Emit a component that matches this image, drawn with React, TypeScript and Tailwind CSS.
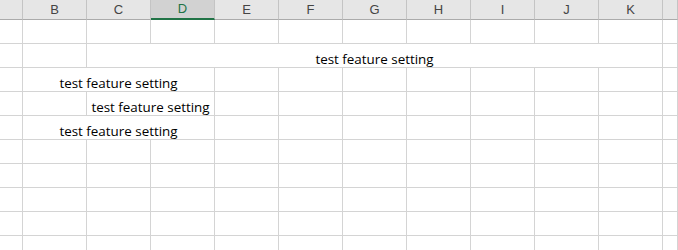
import React from "react";

const cols = ["", "B", "C", "D", "E", "F", "G", "H", "I", "J", "K", ""];

type Cell = { span: number; text?: string };

const single = (n: number): Cell[] => Array.from({ length: n }, () => ({ span: 1 }));

const rows: Cell[][] = [
  single(12),
  [{ span: 1 }, { span: 1 }, { span: 9, text: "test feature setting" }, { span: 1 }],
  [{ span: 1 }, { span: 3, text: "test feature setting" }, ...single(7), { span: 1 }],
  [{ span: 1 }, { span: 1 }, { span: 2, text: "test feature setting" }, ...single(7), { span: 1 }],
  [{ span: 1 }, { span: 3, text: "test feature setting" }, ...single(7), { span: 1 }],
  single(12),
  single(12),
  single(12),
  single(12),
  single(12),
];

const spanClass: Record<number, string> = {
  1: "col-span-1",
  2: "col-span-2",
  3: "col-span-3",
  9: "col-span-9",
};

export default function App() {
  return (
    <div className="w-[678px] h-[250px] overflow-hidden bg-white">
      <div className="grid grid-cols-[23px_repeat(10,64px)_1fr]">
        {cols.map((c, i) => (
          <div
            key={i}
            className={
              "h-[20px] flex items-center justify-center text-[13px] border-r border-r-[#c4c4c4] " +
              (c === "D"
                ? "bg-[#d2d2d2] text-[#217346] border-b-2 border-b-[#217346]"
                : "bg-[#e6e6e6] text-[#444444] border-b border-b-[#ababab]")
            }
            style={{ fontFamily: '"Liberation Sans", Arial, sans-serif' }}
          >
            {c}
          </div>
        ))}
        {rows.map((r, ri) =>
          r.map((cell, ci) => (
            <div
              key={ri + "-" + ci}
              className={
                spanClass[cell.span] +
                " h-[24px] border-r border-b border-[#d4d4d4] flex items-end justify-center text-[13.4px] leading-[16px] text-black whitespace-nowrap"
              }
              style={{ fontFamily: '"Open Sans", "Noto Sans", sans-serif' }}
            >
              {cell.text}
            </div>
          ))
        )}
      </div>
    </div>
  );
}
